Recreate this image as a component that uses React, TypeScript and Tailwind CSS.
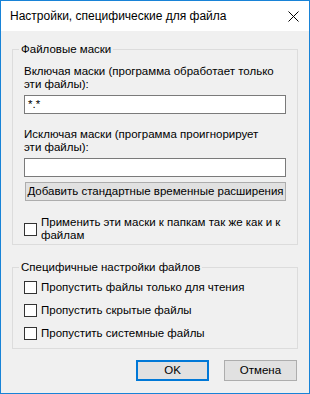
const font = { fontFamily: '"Liberation Sans", Arial, sans-serif' };

function Checkbox({ children }: { children: React.ReactNode }) {
  return (
    <label className="flex items-center gap-[4px]">
      <span className="w-[13px] h-[13px] shrink-0 border border-[#333333] bg-white" />
      <span className="leading-[13px] whitespace-nowrap">{children}</span>
    </label>
  );
}

function Group({ title, className, children }: { title: string; className?: string; children: React.ReactNode }) {
  return (
    <fieldset className={"border border-[#dcdcdc] px-[11px] " + (className ?? "")}>
      <legend className="ml-[-5px] px-[2px] leading-[15px]">{title}</legend>
      {children}
    </fieldset>
  );
}

export default function App() {
  return (
    <div
      className="w-[310px] h-[394px] border border-[#1883d7] bg-[#f0f0f0] flex flex-col text-[11.5px] text-black"
      style={font}
    >
      <div className="h-[30px] bg-white flex items-center justify-between pl-[9px] pr-[9px]">
        <span className="text-[12px]">Настройки, специфические для файла</span>
        <svg width="11" height="11" viewBox="0 0 11 11" className="mr-[1px]">
          <path d="M0.5 0.5 L10.5 10.5 M10.5 0.5 L0.5 10.5" stroke="#000" strokeWidth="1" />
        </svg>
      </div>

      <div className="flex flex-col px-[11px] pt-[11px]">
        <Group title="Файловые маски" className="pb-[2px]">
          <div className="pt-[8px] leading-[13px] whitespace-nowrap">
            Включая маски (программа обработает только
            <br />
            эти файлы):
          </div>
          <div className="mt-[4px] h-[19px] border border-[#7a7a7a] bg-white px-[3px] leading-[17px]">*.*</div>
          <div className="mt-[14px] leading-[13px] whitespace-nowrap">
            Исключая маски (программа проигнорирует
            <br />
            эти файлы):
          </div>
          <div className="mt-[4px] h-[19px] border border-[#7a7a7a] bg-white" />
          <button className="mt-[5px] w-[261px] ml-[1px] h-[19px] border border-[#adadad] bg-[#e1e1e1] leading-[17px] text-center whitespace-nowrap">
            Добавить стандартные временные расширения
          </button>
          <div className="mt-[15px]">
            <Checkbox>
              Применить эти маски к папкам так же как и к
              <br />
              файлам
            </Checkbox>
          </div>
        </Group>

        <Group title="Специфичные настройки файлов" className="mt-[15px] pb-[8px]">
          <div className="flex flex-col gap-[10px] pt-[6px]">
            <Checkbox>Пропустить файлы только для чтения</Checkbox>
            <Checkbox>Пропустить скрытые файлы</Checkbox>
            <Checkbox>Пропустить системные файлы</Checkbox>
          </div>
        </Group>

        <div className="flex justify-end gap-[15px] mt-[11px] pr-[1px]">
          <button className="w-[73px] h-[21px] border-2 border-[#0078d7] bg-[#e1e1e1]">OK</button>
          <button className="w-[73px] h-[21px] border border-[#adadad] bg-[#e1e1e1]">Отмена</button>
        </div>
      </div>
    </div>
  );
}
